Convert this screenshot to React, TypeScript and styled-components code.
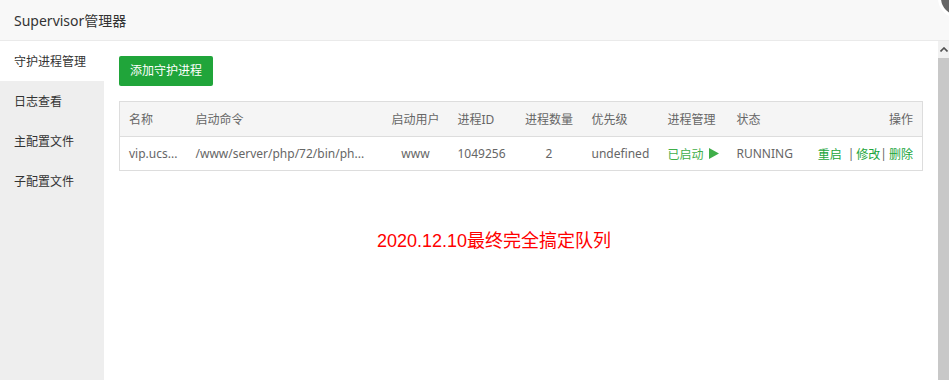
import React from "react";
import styled, { createGlobalStyle } from "styled-components";

const Global = createGlobalStyle`
  html, body { margin: 0; padding: 0; overflow: hidden; background: #fff; }
  body {
    font-family: "Noto Sans", "Noto Sans CJK SC", sans-serif;
    font-size: 12px;
    color: #333;
  }
  * { box-sizing: border-box; }
`;

const Page = styled.div`
  position: relative;
  width: 949px;
  height: 380px;
  overflow: hidden;
  display: flex;
  flex-direction: column;
`;

const Header = styled.div`
  position: relative;
  flex: 0 0 41px;
  height: 41px;
  background: #f8f8f8;
  border-bottom: 1px solid #eaeaea;
  padding-left: 14px;
  line-height: 41px;
  font-size: 14px;
  color: #333;
`;

const CloseBtn = styled.div`
  position: absolute;
  top: -22px;
  right: -29px;
  width: 40px;
  height: 40px;
  border-radius: 50%;
  background: #666;
  border: 3px solid #fff;
  display: flex;
  align-items: center;
  justify-content: center;
`;

const Body = styled.div`
  flex: 1;
  display: flex;
  min-height: 0;
`;

const Sidebar = styled.div`
  flex: 0 0 104px;
  background: #eeeeee;
  display: flex;
  flex-direction: column;
`;

const MenuItem = styled.div<{ $active?: boolean }>`
  height: 40px;
  line-height: 41px;
  padding-left: 14px;
  font-size: 12px;
  color: #333;
  background: ${(p) => (p.$active ? "#fff" : "transparent")};
`;

const Main = styled.div`
  flex: 1;
  padding: 15px 15px 0 15px;
  display: flex;
  flex-direction: column;
  align-items: flex-start;
`;

const AddButton = styled.button`
  height: 30px;
  width: 94px;
  padding: 0;
  border: none;
  border-radius: 2px;
  background: #20a53a;
  color: #fff;
  font-family: inherit;
  font-size: 12px;
  line-height: 30px;
`;

const Table = styled.table`
  margin-top: 15px;
  width: 803px;
  table-layout: fixed;
  border-collapse: collapse;
  border: 1px solid #ddd;
  font-size: 12px;
  color: #666;
`;

const Th = styled.th<{ $align?: string }>`
  height: 35px;
  padding: 0 9px;
  background: #f5f5f5;
  border-bottom: 1px solid #ddd;
  font-weight: normal;
  text-align: ${(p) => p.$align || "left"};
  white-space: nowrap;
  color: #666;
`;

const Td = styled.td<{ $align?: string; $clip?: boolean }>`
  height: 34px;
  padding: 0 9px;
  text-align: ${(p) => p.$align || "left"};
  white-space: nowrap;
  overflow: ${(p) => (p.$clip ? "hidden" : "visible")};
  text-overflow: ${(p) => (p.$clip ? "ellipsis" : "clip")};
  color: #666;
`;

const Started = styled.span`
  color: #3fae49;
  display: inline-flex;
  align-items: center;
  gap: 5px;
`;

const Actions = styled.span`
  display: inline-flex;
  align-items: center;
  justify-content: flex-end;
  white-space: nowrap;
`;

const ActionLink = styled.a`
  color: #20a53a;
  text-decoration: none;
`;

const Sep = styled.span<{ $l: number; $r: number }>`
  color: #666;
  margin: 0 ${(p) => p.$r}px 0 ${(p) => p.$l}px;
`;

const Note = styled.div`
  margin: 58px 0 0 258px;
  font-family: "Liberation Sans", "Noto Sans CJK SC", sans-serif;
  font-size: 18px;
  line-height: 24px;
  color: #ff0000;
`;

const ScrollTrack = styled.div`
  flex: 0 0 11px;
  display: flex;
  flex-direction: column;
  background: #c8c8c8;
`;

const ScrollArrow = styled.div`
  flex: 0 0 17px;
  background: #f1f1f1;
  display: flex;
  align-items: center;
  justify-content: flex-start;
  padding-left: 2px;
`;

const ScrollThumb = styled.div`
  flex: 1;
  background: #c8c8c8;
`;

const cols = [67, 196, 66, 67, 67, 76, 69, 73, 122];

export default function App() {
  return (
    <>
      <Global />
      <Page>
        <Header>
          Supervisor管理器
          <CloseBtn>
            <svg width="12" height="12" viewBox="0 0 12 12">
              <path d="M1 1L11 11M11 1L1 11" stroke="#fff" strokeWidth="2" />
            </svg>
          </CloseBtn>
        </Header>
        <Body>
          <Sidebar>
            <MenuItem $active>守护进程管理</MenuItem>
            <MenuItem>日志查看</MenuItem>
            <MenuItem>主配置文件</MenuItem>
            <MenuItem>子配置文件</MenuItem>
          </Sidebar>
          <Main>
            <AddButton>添加守护进程</AddButton>
            <Table>
              <colgroup>
                {cols.map((w, i) => (
                  <col key={i} style={{ width: w }} />
                ))}
              </colgroup>
              <thead>
                <tr>
                  <Th>名称</Th>
                  <Th>启动命令</Th>
                  <Th $align="center">启动用户</Th>
                  <Th>进程ID</Th>
                  <Th $align="center">进程数量</Th>
                  <Th>优先级</Th>
                  <Th>进程管理</Th>
                  <Th>状态</Th>
                  <Th $align="right">操作</Th>
                </tr>
              </thead>
              <tbody>
                <tr>
                  <Td $clip>vip.ucs...</Td>
                  <Td $clip>/www/server/php/72/bin/ph...</Td>
                  <Td $align="center">www</Td>
                  <Td>1049256</Td>
                  <Td $align="center">2</Td>
                  <Td>undefined</Td>
                  <Td>
                    <Started>
                      已启动
                      <svg width="10" height="11" viewBox="0 0 10 11">
                        <polygon points="0,0 10,5.5 0,11" fill="#3fae49" />
                      </svg>
                    </Started>
                  </Td>
                  <Td>RUNNING</Td>
                  <Td $align="right">
                    <Actions>
                      <ActionLink>重启</ActionLink>
                      <Sep $l={6} $r={2}>|</Sep>
                      <ActionLink>修改</ActionLink>
                      <Sep $l={0} $r={2}>|</Sep>
                      <ActionLink>删除</ActionLink>
                    </Actions>
                  </Td>
                </tr>
              </tbody>
            </Table>
            <Note>2020.12.10最终完全搞定队列</Note>
          </Main>
          <ScrollTrack>
            <ScrollArrow>
              <svg width="8" height="5" viewBox="0 0 8 5">
                <path d="M0.5 4.5L4 1L7.5 4.5" stroke="#505050" strokeWidth="1.6" fill="none" />
              </svg>
            </ScrollArrow>
            <ScrollThumb />
          </ScrollTrack>
        </Body>
      </Page>
    </>
  );
}
